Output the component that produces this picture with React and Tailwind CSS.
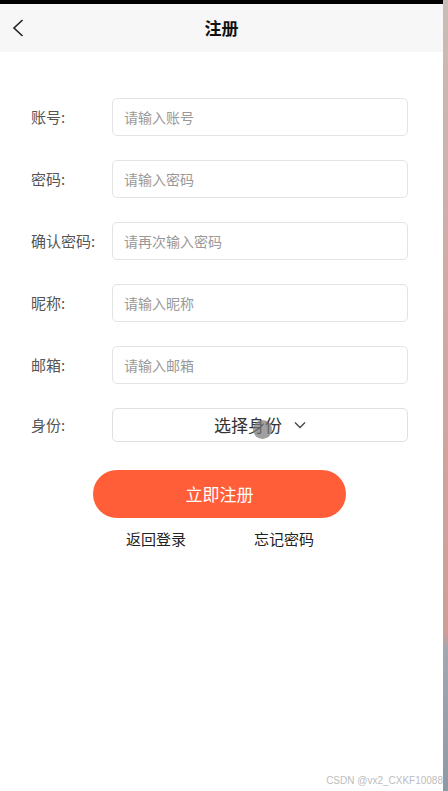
import React, { useState } from 'react';

const fields = [
  { label: '账号:', placeholder: '请输入账号', type: 'text' },
  { label: '密码:', placeholder: '请输入密码', type: 'password' },
  { label: '确认密码:', placeholder: '请再次输入密码', type: 'password' },
  { label: '昵称:', placeholder: '请输入昵称', type: 'text' },
  { label: '邮箱:', placeholder: '请输入邮箱', type: 'text' },
];

const Register = () => {
  const [values, setValues] = useState({});

  return (
    <div className="flex w-[448px] h-[791px] overflow-hidden font-['Noto_Sans_CJK_SC','Microsoft_YaHei',sans-serif]">
      <div className="relative w-[443px] h-full bg-white flex flex-col">
        <div className="h-[4px] bg-black" />

        {/* Header */}
        <div className="h-[48px] bg-[#f7f7f7] grid grid-cols-[48px_1fr_48px] items-center">
          <svg className="ml-[12px] w-[12px] h-[18px]" viewBox="0 0 12 18" fill="none">
            <path d="M10.5 1 L2 9 L10.5 17" stroke="#222" strokeWidth="1.6" />
          </svg>
          <h1 className="text-center text-[17px] font-bold text-[#111]">注册</h1>
          <div />
        </div>

        {/* Form */}
        <div className="pt-[46px] flex flex-col gap-[24px]">
          {fields.map((f, i) => (
            <div key={i} className="flex items-center pl-[31px]">
              <label className="w-[81px] text-[15px] text-[#555]">{f.label}</label>
              <input
                type={f.type}
                placeholder={f.placeholder}
                value={values[i] || ''}
                onChange={(e) => setValues({ ...values, [i]: e.target.value })}
                className="w-[296px] h-[38px] px-[11px] border border-[#e3e3e3] rounded-[5px] text-[14px] text-[#333] placeholder:text-[#999] outline-none"
              />
            </div>
          ))}
          <div className="flex items-center pl-[31px]">
            <label className="w-[81px] text-[15px] text-[#555]">身份:</label>
            <div className="relative w-[296px] h-[34px] border border-[#e0e0e0] rounded-[5px] flex items-center justify-center gap-[12px]">
              <span className="text-[17px] text-[#333]">选择身份</span>
              <svg className="w-[12px] h-[8px]" viewBox="0 0 12 8" fill="none">
                <path d="M1 1.5 L6 6.5 L11 1.5" stroke="#444" strokeWidth="1.3" />
              </svg>
              <div className="absolute left-[140px] top-[11px] w-[19px] h-[19px] rounded-full bg-[#777] opacity-70" />
            </div>
          </div>
        </div>

        {/* Actions */}
        <div className="pl-[93px] mt-[28px]">
          <button className="w-[253px] h-[48px] rounded-full bg-[#ff5e38] text-white text-[17px]">
            立即注册
          </button>
        </div>
        <div className="flex pl-[126px] gap-[68px] mt-[10px] text-[15px] text-[#222]">
          <span>返回登录</span>
          <span>忘记密码</span>
        </div>

        <div className="absolute right-0 bottom-[3px] text-[10px] text-[#bdbdbd] font-['Liberation_Sans',sans-serif] whitespace-nowrap">
          CSDN @vx2_CXKF10088
        </div>
      </div>
      <div className="w-[5px] h-full bg-[linear-gradient(to_bottom,#c9bcb6_0%,#d2aaa5_35%,#cf9d9a_80%,#a3a7b0_82%,#8e99a6_100%)]" />
    </div>
  );
};

export default Register;
